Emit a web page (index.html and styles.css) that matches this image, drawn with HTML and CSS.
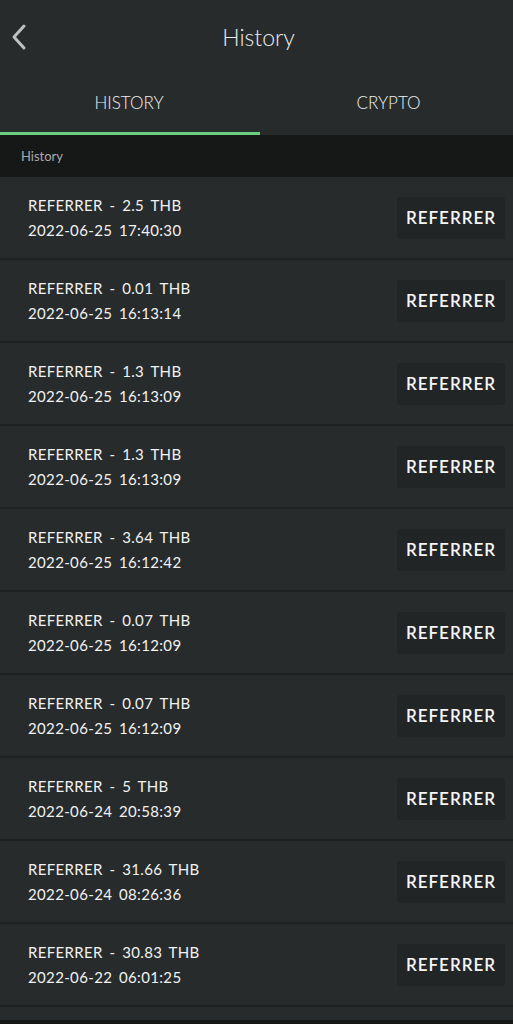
FILE: index.html
```html
<!DOCTYPE html>
<html lang="en">
<head>
  <meta charset="UTF-8" />
  <meta name="viewport" content="width=device-width, initial-scale=1" />
  <title>History</title>
  <link rel="stylesheet" href="styles.css">
</head>
<body>
  <div class="topbar">
    <svg class="back" width="20" height="28" viewBox="0 0 20 28">
      <polyline points="15,3 5,14 15,25" fill="none" stroke="#bfc1c1" stroke-width="3" stroke-linecap="round" stroke-linejoin="round"/>
    </svg>
    <div class="title">History</div>
  </div>

  <div class="tabs">
    <div class="tab active">HISTORY</div>
    <div class="tab">CRYPTO</div>
  </div>

  <div class="section-head">History</div>

  <div class="list">
    <div class="row">
      <div class="info"><div>REFERRER - 2.5 THB</div><div>2022-06-25 17:40:30</div></div>
      <div class="tag">REFERRER</div>
    </div>
    <div class="row">
      <div class="info"><div>REFERRER - 0.01 THB</div><div>2022-06-25 16:13:14</div></div>
      <div class="tag">REFERRER</div>
    </div>
    <div class="row">
      <div class="info"><div>REFERRER - 1.3 THB</div><div>2022-06-25 16:13:09</div></div>
      <div class="tag">REFERRER</div>
    </div>
    <div class="row">
      <div class="info"><div>REFERRER - 1.3 THB</div><div>2022-06-25 16:13:09</div></div>
      <div class="tag">REFERRER</div>
    </div>
    <div class="row">
      <div class="info"><div>REFERRER - 3.64 THB</div><div>2022-06-25 16:12:42</div></div>
      <div class="tag">REFERRER</div>
    </div>
    <div class="row">
      <div class="info"><div>REFERRER - 0.07 THB</div><div>2022-06-25 16:12:09</div></div>
      <div class="tag">REFERRER</div>
    </div>
    <div class="row">
      <div class="info"><div>REFERRER - 0.07 THB</div><div>2022-06-25 16:12:09</div></div>
      <div class="tag">REFERRER</div>
    </div>
    <div class="row">
      <div class="info"><div>REFERRER - 5 THB</div><div>2022-06-24 20:58:39</div></div>
      <div class="tag">REFERRER</div>
    </div>
    <div class="row">
      <div class="info"><div>REFERRER - 31.66 THB</div><div>2022-06-24 08:26:36</div></div>
      <div class="tag">REFERRER</div>
    </div>
    <div class="row">
      <div class="info"><div>REFERRER - 30.83 THB</div><div>2022-06-22 06:01:25</div></div>
      <div class="tag">REFERRER</div>
    </div>
  </div>

  <div class="bottom"></div>
</body>
</html>
```

FILE: styles.css
```css
html, body {
  margin: 0;
  padding: 0;
  height: 100%;
}
body {
  background: #272b2c;
  color: #f2f2f2;
  font-family: Lato, "Open Sans", sans-serif;
  display: flex;
  flex-direction: column;
  overflow: hidden;
}
/* header */
.topbar {
  height: 70px;
  display: flex;
  align-items: center;
  justify-content: center;
  position: relative;
}
.back {
  position: absolute;
  left: 9px;
  top: 23px;
}
.title {
  font-size: 23px;
  font-weight: 300;
  color: #ececec;
  margin-left: 4px;
  margin-top: 4px;
}
/* tabs */
.tabs {
  display: flex;
  height: 65px;
}
.tab {
  flex: 0 0 260px;
  display: flex;
  align-items: center;
  justify-content: center;
  font-size: 17px;
  font-weight: 300;
  color: #f0f0f0;
  box-sizing: border-box;
}
.tab:last-child {
  flex: 1;
  padding-left: 4px;
}
.tab.active {
  border-bottom: 3px solid #6ccf7f;
  padding-right: 2px;
  padding-top: 2px;
}
.section-head {
  background: #161717;
  height: 42px;
  display: flex;
  align-items: center;
  padding-left: 21px;
  font-size: 13px;
  color: #a9abab;
}
/* list */
.row {
  height: 83px;
  box-sizing: border-box;
  border-bottom: 2px solid #1f2223;
  display: flex;
  align-items: center;
  justify-content: space-between;
  padding: 0 8px 0 28px;
}
.info {
  font-size: 15px;
  line-height: 25px;
  color: #f2f2f2;
  letter-spacing: 0.35px;
  word-spacing: 2.5px;
  margin-top: 1px;
}
.tag {
  background: #222526;
  border-radius: 3px;
  height: 42px;
  width: 108px;
  display: flex;
  align-items: center;
  justify-content: center;
  font-size: 17px;
  font-weight: 600;
  letter-spacing: 1px;
  color: #f6f6f6;
}
.bottom {
  margin-top: auto;
  height: 4px;
  background: #151616;
}
```
